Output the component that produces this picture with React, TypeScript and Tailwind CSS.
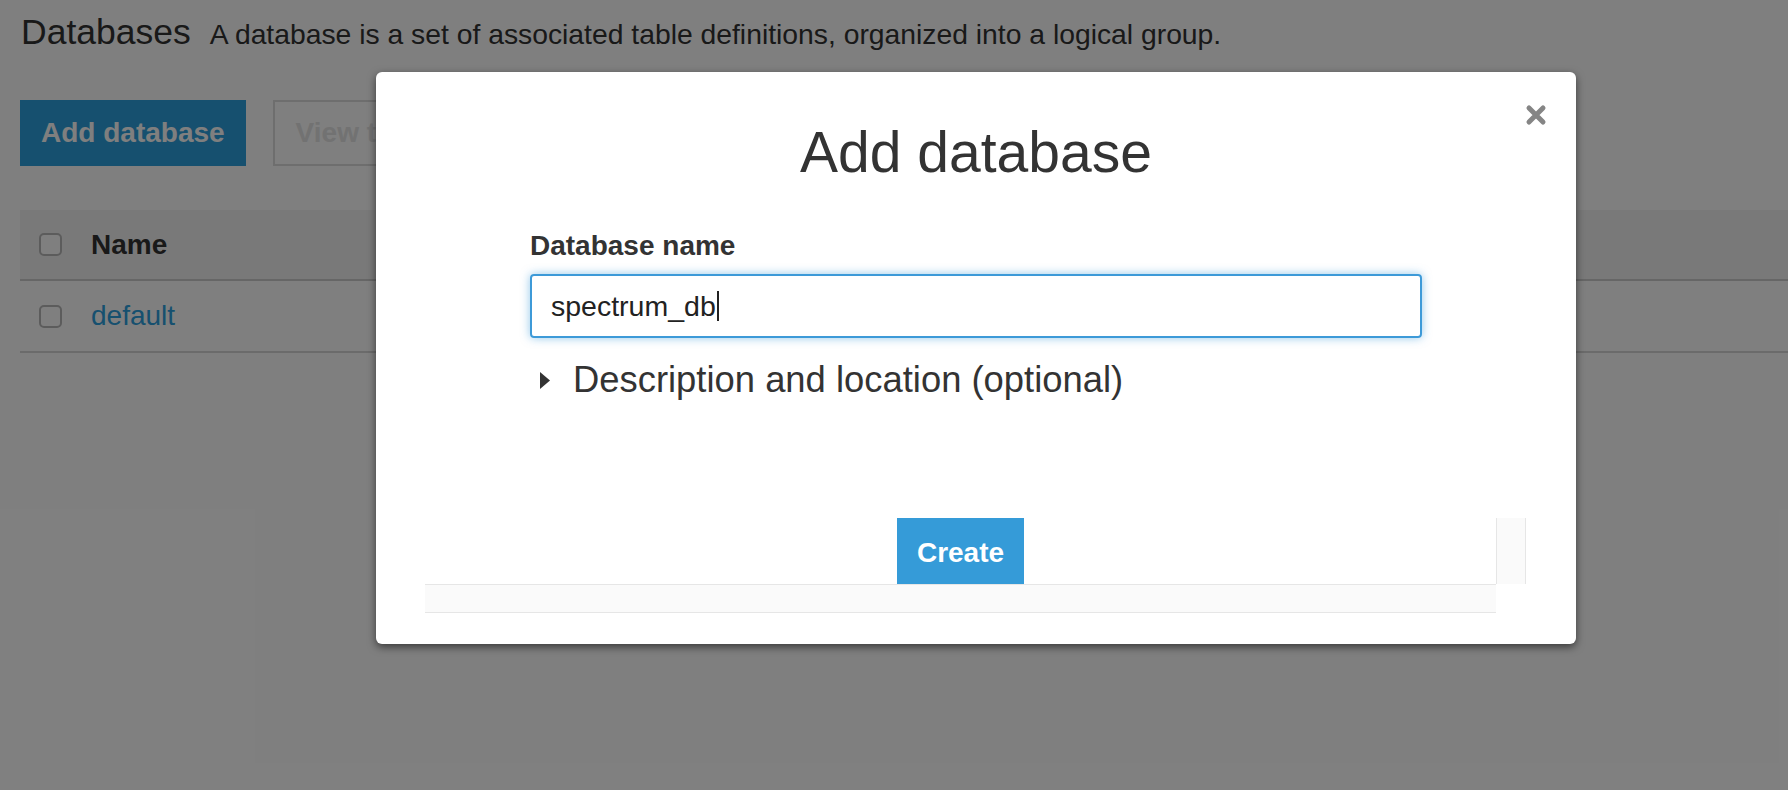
import React from "react";

const Checkbox = () => (
  <span className="inline-block h-[23px] w-[23px] shrink-0 rounded-[5px] border-2 border-[#b8b8b8] bg-white" />
);

const CloseIcon = () => (
  <svg width="22" height="24" viewBox="0 0 22 24" fill="none">
    <path
      d="M4 5 L18 19 M18 5 L4 19"
      stroke="#858585"
      strokeWidth="5"
      strokeLinecap="round"
    />
  </svg>
);

const Caret = () => (
  <svg width="10" height="17" viewBox="0 0 10 17">
    <polygon points="0,0 10,8.5 0,17" fill="#333333" />
  </svg>
);

const AddDatabaseModal = () => (
  <div className="absolute left-[376px] top-[72px] w-[1200px] rounded-[6px] bg-white pb-[31px] shadow-[0_3px_8px_rgba(0,0,0,0.55)]">
    <button className="absolute right-[29px] top-[31px]">
      <CloseIcon />
    </button>

    <h2 className="pt-[52px] text-center text-[57px] font-normal leading-[57px] text-[#333333]">
      Add database
    </h2>

    <div className="mx-[154px]">
      <label className="mt-[49px] block text-[28px] font-bold leading-[32px] text-[#333333]">
        Database name
      </label>
      <div className="mt-[12px] flex h-[64px] items-center rounded-[4px] border-2 border-[#3d9ad8] pl-[19px] text-[28.5px] text-[#222222] shadow-[0_0_10px_rgba(61,154,216,0.55)]">
        <span>spectrum_db</span>
        <span className="ml-[1px] inline-block h-[30px] w-[2px] bg-[#222222]" />
      </div>

      <div className="mt-[22px] flex h-[40px] items-center">
        <span className="ml-[10px] flex">
          <Caret />
        </span>
        <span className="ml-[23px] text-[36.4px] leading-[40px] text-[#333333]">
          Description and location (optional)
        </span>
      </div>
    </div>

    <div className="ml-[49px] mr-[50px] mt-[118px] flex flex-col">
      <div className="flex h-[66px]">
        <div className="flex flex-1 justify-center">
          <button className="h-[66px] bg-[#359bd8] px-[20px] pt-[3px] text-[28px] font-bold text-white">
            Create
          </button>
        </div>
        <div className="w-[30px] border-x border-[#e6e6e6] bg-[#fafafa]" />
      </div>
      <div className="mr-[30px] h-[29px] border-y border-[#e6e6e6] bg-[#fafafa]" />
    </div>
  </div>
);

export default function App() {
  return (
    <div className="relative h-[790px] w-full overflow-hidden bg-white font-['Liberation_Sans',Arial,sans-serif] text-[#333333]">
      <div className="flex items-baseline pl-[21px] pt-[12px]">
        <h1 className="text-[35.5px] font-normal leading-[40px]">Databases</h1>
        <p className="ml-[19px] text-[28.3px] leading-[40px]">
          A database is a set of associated table definitions, organized into a
          logical group.
        </p>
      </div>

      <div className="mt-[46px] flex gap-[27px] pl-[20px]">
        <button className="h-[66px] bg-[#2ca0de] px-[21px] text-[28px] font-bold text-white">
          Add database
        </button>
        <button className="h-[66px] border-2 border-[#dddddd] bg-white px-[21px] text-[28px] font-bold text-[#e4e4e4]">
          View tables
        </button>
      </div>

      <div className="ml-[20px] mt-[44px]">
        <div className="flex h-[71px] items-center gap-[29px] border-b-2 border-[#cccccc] bg-[#f2f2f2] pl-[19px]">
          <Checkbox />
          <span className="text-[28px] font-bold">Name</span>
        </div>
        <div className="flex h-[72px] items-center gap-[29px] border-b-2 border-[#d6d6d6] pl-[19px]">
          <Checkbox />
          <a className="text-[28px] text-[#2ca0de]">default</a>
        </div>
      </div>

      <div className="absolute inset-0 bg-black/50" />

      <AddDatabaseModal />
    </div>
  );
}
